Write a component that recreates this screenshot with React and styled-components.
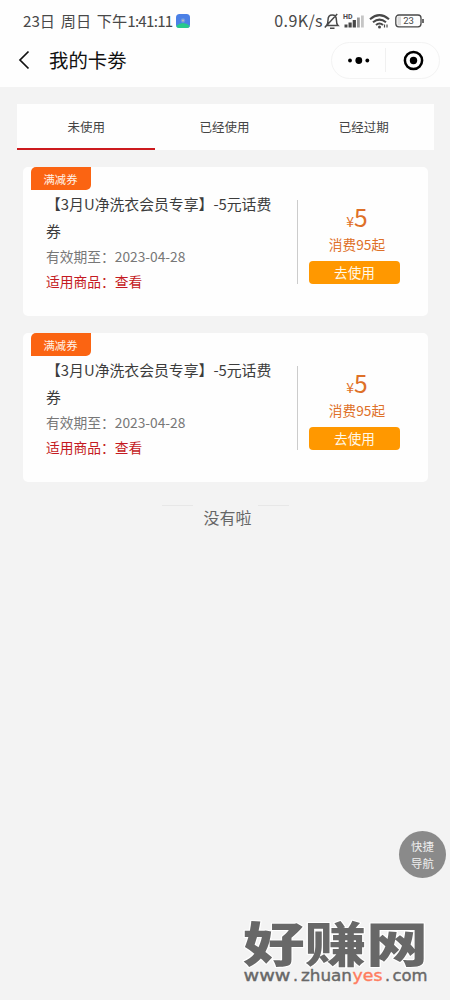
import React from "react";
import styled, { createGlobalStyle } from "styled-components";

const Global = createGlobalStyle`
  * { box-sizing: border-box; }
  body { margin: 0; background: #f3f3f3; font-family: "Noto Sans CJK SC", sans-serif; color: #444; }
`;
const Page = styled.main`
  position: relative;
  width: 450px;
  height: 1000px;
  overflow: hidden;
  background: #f3f3f3;
`;
const Header = styled.header`
  height: 87px;
  background: #fefefe;
`;
const StatusBar = styled.div`
  display: flex;
  align-items: center;
  height: 41px;
  padding: 0 23px 0 23px;
  color: #484848;
`;
const Clock = styled.span`
  font: 400 15.2px/20px "Noto Sans CJK SC", sans-serif;
  width: 153px;
  padding-bottom: 2px;
  word-spacing: 2.3px;
  white-space: nowrap;
`;
const Time = styled.span`
  letter-spacing: -0.75px;
`;
const Speed = styled.span`
  margin-left: auto;
  padding-bottom: 2px;
  font: 400 16px/20px "Noto Sans CJK SC", sans-serif;
  letter-spacing: 0.4px;
  white-space: nowrap;
`;
const StatusIcons = styled.svg`
  flex: none;
  width: 104px;
  height: 20px;
`;
const NavBar = styled.div`
  display: flex;
  align-items: center;
  height: 38px;
  padding: 0 10px 0 17px;
`;
const BackIcon = styled.svg`
  width: 14px;
  height: 20px;
`;
const Title = styled.h1`
  margin: 0 0 0 18px;
  font-size: 19.4px;
  line-height: 28px;
  font-weight: 400;
  color: #111;
`;
const Capsule = styled.div`
  display: flex;
  align-items: center;
  margin-left: auto;
  width: 109px;
  height: 37px;
  border: 1px solid #f3f3f3;
  border-radius: 19px;
`;
const CapsuleHalf = styled.div`
  display: flex;
  flex: 1;
  align-items: center;
  justify-content: center;
  height: 24px;
  & + & { border-left: 1px solid #f0f0f0; }
`;
const Tabs = styled.nav`
  display: flex;
  margin: 17px 16px 0 17px;
  height: 46px;
  background: #fefefe;
`;
const Tab = styled.div`
  flex: 1;
  padding-right: ${(p) => (p.$active ? 0 : 1)}px;
  text-align: center;
  font-size: 12.5px;
  line-height: 46px;
  border-bottom: ${(p) => (p.$active ? "2px solid #cc1a1e" : "0")};
`;
const Coupons = styled.section`
  display: flex;
  flex-direction: column;
  gap: 17px;
  padding: 17px 22px 0 23px;
`;
const Card = styled.article`
  display: flex;
  height: 149px;
  background: #fefefe;
  border-radius: 5px;
`;
const Info = styled.div`
  width: 274px;
  padding-left: 8px;
`;
const Tag = styled.div`
  width: 60px;
  height: 23px;
  padding-right: 1px;
  border-radius: 5px 0 5px 0;
  background: #fb6412;
  color: #fff3e8;
  font-size: 11.3px;
  line-height: 24px;
  text-align: center;
`;
const Name = styled.div`
  padding-left: 15px;
  font-size: 14.85px;
  line-height: 27px;
  color: #3c3c3c;
  white-space: pre-line;
`;
const Line = styled.div`
  padding-left: 15px;
  font-size: 13.75px;
  line-height: 25px;
  color: ${(p) => (p.$red ? "#c41a22" : "#777")};
`;
const Action = styled.div`
  display: flex;
  flex-direction: column;
  align-items: center;
  width: 115px;
  height: 84px;
  margin-top: 33px;
  border-left: 1px solid #ccc;
  color: #de7028;
`;
const Price = styled.div`
  margin-top: 2px;
  padding-left: 4px;
  height: 29px;
  font-size: 24.5px;
  line-height: 30px;
  small { font-size: 14px; }
`;
const Rule = styled.div`
  padding-left: 4px;
  font-size: 13.7px;
  line-height: 26px;
`;
const UseButton = styled.button`
  width: 91px;
  height: 23px;
  margin: 4px 1px 0 0;
  padding: 0;
  border: 0;
  border-radius: 4px;
  background: #ff9800;
  color: #fff9e8;
  font: 400 13.6px/23px "Noto Sans CJK SC", sans-serif;
`;
const End = styled.div`
  display: flex;
  justify-content: center;
  margin-top: 23px;
`;
const Dash = styled.i`
  width: 31px;
  height: 1px;
  background: #e7e7e7;
`;
const EndText = styled.span`
  width: 65px;
  padding-left: 5px;
  text-align: center;
  font-size: 16px;
  line-height: 24px;
  color: #666;
`;
const QuickNav = styled.div`
  position: absolute;
  left: 399px;
  top: 831px;
  width: 47px;
  height: 47px;
  padding-top: 7px;
  border-radius: 50%;
  background: #8a8a8a;
  color: #eee;
  font-size: 11.4px;
  line-height: 17px;
  text-align: center;
`;
const Watermark = styled.svg`
  position: absolute;
  left: 238px;
  top: 900px;
  width: 200px;
  height: 92px;
`;

const coupons = [1, 2];

const domain = [
  { text: "www", x: 5.5, width: 47 },
  { text: ".", x: 55, width: 5 },
  { text: "zhuan", x: 63, width: 51 },
  { text: "yes", x: 114.5, width: 30, accent: true },
  { text: ".", x: 147, width: 5 },
  { text: "com", x: 154.5, width: 35 },
];

function Coupon() {
  return (
    <Card>
      <Info>
        <Tag>满减券</Tag>
        <Name>{"【3月U净洗衣会员专享】-5元话费\n券"}</Name>
        <Line>有效期至：2023-04-28</Line>
        <Line $red>适用商品：查看</Line>
      </Info>
      <Action>
        <Price><small>¥</small>5</Price>
        <Rule>消费95起</Rule>
        <UseButton>去使用</UseButton>
      </Action>
    </Card>
  );
}

export default function App() {
  return (
    <Page>
      <Global />
      <Header>
        <StatusBar>
          <Clock>23日 周日 下午<Time>1:41:11</Time></Clock>
          <svg width="14" height="14" viewBox="0 0 14 14">
            <defs><clipPath id="app"><rect width="14" height="14" rx="3.5" /></clipPath></defs>
            <g clipPath="url(#app)">
              <rect width="14" height="14" fill="#4b80e6" />
              <path d="M0 14V12Q7 6 14 12V14Z" fill="#27c98b" />
              <circle cx="7" cy="6.5" r="2.2" fill="#6f9be0" />
              <circle cx="7" cy="6.5" r="1" fill="#c9b8b8" />
            </g>
          </svg>
          <Speed>0.9K/s</Speed>
          <StatusIcons viewBox="0 0 104 20" fill="none" stroke="#484848">
            <path d="M3.5 14.5C5 13 5 11.5 5 9C5 5.5 7 4 9.2 4S13.4 5.5 13.4 9C13.4 11.5 13.4 13 15 14.5ZM7 17.3H11.5M1.8 16.5L14.2 3" strokeWidth="1.5" />
            <text x="20" y="7.5" fontFamily="Roboto" fontSize="7" fontWeight="700" fill="#484848" stroke="none">HD</text>
            <g fill="#484848" stroke="none">
              <rect x="21.5" y="13.5" width="3" height="3" /><rect x="25.5" y="11.5" width="3.2" height="5" /><rect x="29.7" y="9" width="3.2" height="7.5" />
              <rect x="34" y="6.5" width="2.8" height="10" fill="#999" /><rect x="38" y="4.5" width="2.8" height="12" fill="#c6c6c6" />
            </g>
            <path d="M47 8.2Q56.5 .2 66 8.2M50 11.3Q56.5 6 63 11.3M53 14Q56.5 11 60 14" strokeWidth="2.1" />
            <circle cx="56.5" cy="16" r="1.5" fill="#484848" stroke="none" />
            <path d="M61.5 16.5V13.5M64 13.5V16.5" strokeWidth="1.2" />
            <rect x="72.8" y="4" width="25.2" height="11.8" rx="3" strokeWidth="1.3" />
            <path d="M74.5 5.5H78V14.3H74.5Z" fill="#ddd" stroke="none" />
            <path d="M100 8V12" strokeWidth="1.6" />
            <text x="85.5" y="13.3" textAnchor="middle" fontFamily="Roboto" fontSize="9.5" fill="#484848" stroke="none">23</text>
          </StatusIcons>
        </StatusBar>
        <NavBar>
          <BackIcon viewBox="0 0 14 20" fill="none" stroke="#111" strokeWidth="1.7"><path d="M11.5 1.5L3 10L11.5 18.5" /></BackIcon>
          <Title>我的卡劵</Title>
          <Capsule>
            <CapsuleHalf>
              <svg width="22" height="8"><circle cx="2" cy="4.5" r="1.9" /><circle cx="10.8" cy="4.5" r="3.4" /><circle cx="19.3" cy="4.5" r="1.9" /></svg>
            </CapsuleHalf>
            <CapsuleHalf>
              <svg width="22" height="22"><circle cx="11.5" cy="11.5" r="8.6" fill="none" stroke="#000" strokeWidth="2.5" /><circle cx="11.5" cy="11.5" r="3.7" /></svg>
            </CapsuleHalf>
          </Capsule>
        </NavBar>
      </Header>
      <Tabs><Tab $active>未使用</Tab><Tab>已经使用</Tab><Tab>已经过期</Tab></Tabs>
      <Coupons>{coupons.map((id) => <Coupon key={id} />)}</Coupons>
      <End><Dash /><EndText>没有啦</EndText><Dash /></End>
      <QuickNav>快捷<br />导航</QuickNav>
      <Watermark viewBox="0 0 200 92" fill="#686868" strokeLinejoin="round">
        <text x="5" y="62" fontFamily="Noto Sans CJK SC" fontWeight="900" fontSize="48" textLength="185" lengthAdjust="spacingAndGlyphs" stroke="#fff" strokeWidth="2" paintOrder="stroke">好赚网</text>
        {domain.map((part) => (
          <text
            key={part.x}
            x={part.x}
            y="81"
            fontFamily="DejaVu Sans"
            fontSize="16"
            textLength={part.width}
            lengthAdjust="spacingAndGlyphs"
            fill={part.accent ? "#ff7d60" : "#686868"}
            stroke={part.accent ? "#ff7d60" : "#686868"}
            strokeWidth=".4"
          >
            {part.text}
          </text>
        ))}
      </Watermark>
    </Page>
  );
}
